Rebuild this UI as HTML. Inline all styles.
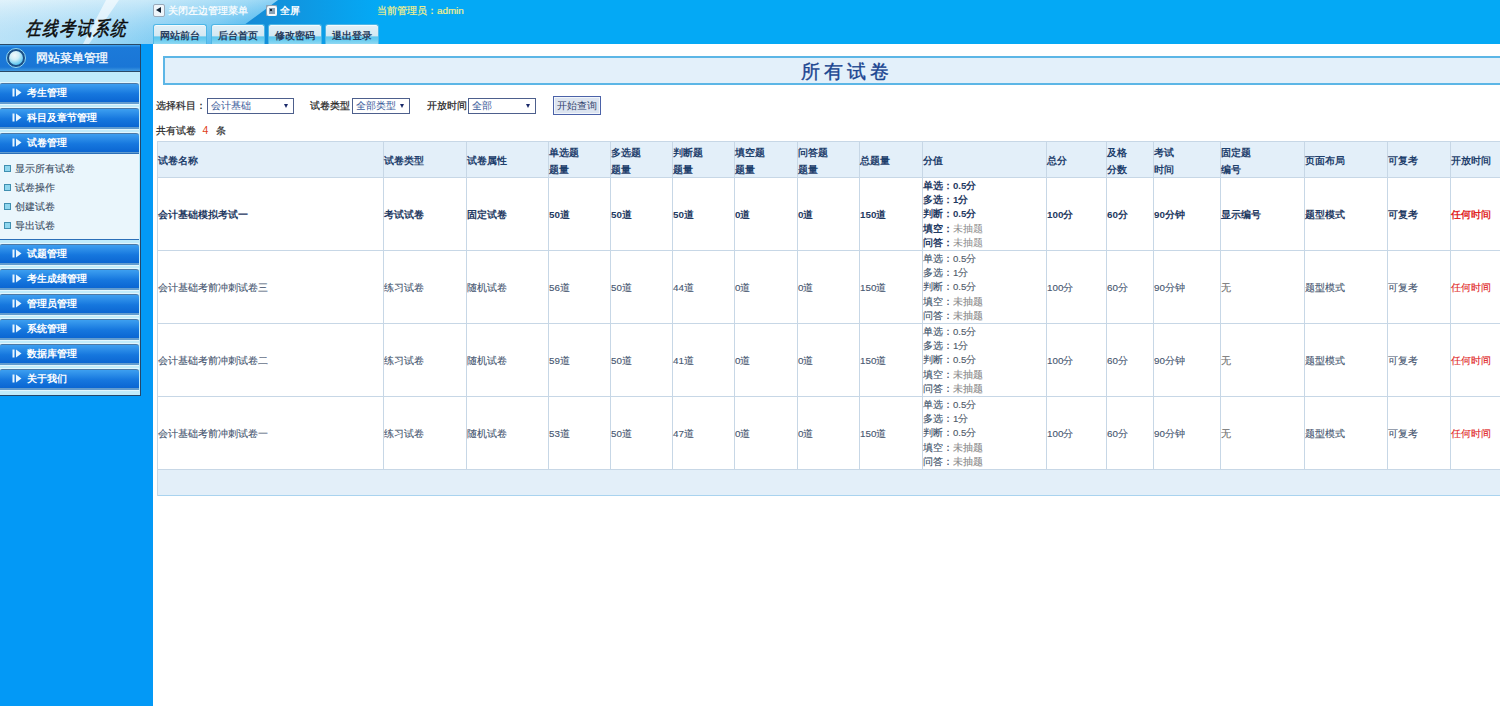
<!DOCTYPE html>
<html><head><meta charset="utf-8"><title>所有试卷</title>
<style>
html,body{margin:0;padding:0;}
body{width:1500px;height:706px;overflow:hidden;position:relative;background:#fff;font-family:"Liberation Sans", sans-serif;}
.abs{position:absolute;}
#hdr{left:0;top:0;width:1500px;height:44px;background:#04a9f5;overflow:hidden;}
#leftbg{left:0;top:44px;width:153px;height:662px;background:#0399f6;}
#side{left:0;top:44px;width:140px;height:351px;background:#c0ebfb;border-right:1px solid #24476a;border-bottom:1px solid #24476a;}
.ttl{left:0;top:0;width:140px;height:27px;}
.mi{position:absolute;left:0;width:139px;height:20px;border-radius:2px 3px 0 0;}
.mi .b{position:absolute;left:0;top:0;width:139px;height:18px;border-top:1px solid #4b79a6;background:linear-gradient(#3d9ff0,#1677de 55%,#0b66d2);border-radius:2px 3px 0 0;}
.mi .s{position:absolute;left:0;top:19px;width:139px;height:2px;background:#629ccf;}
.mi .h1{position:absolute;left:0;top:-1px;width:139px;height:1px;background:#e2f6fd;}
.mi .h2{position:absolute;left:0;top:21px;width:139px;height:1px;background:#e2f6fd;}
.mi .ic{position:absolute;left:12px;top:5px;}
.mi .t{position:absolute;left:27px;top:3px;font-size:9.6px;font-weight:bold;color:#fff;line-height:14px;white-space:nowrap;}
#sub{left:0;top:109px;width:139px;height:85px;background:#eaf6fc;border-top:1px solid #2b6fb8;border-bottom:1px solid #2b6fb8;}
.si{position:absolute;left:4px;font-size:9.7px;color:#3a4c62;line-height:12px;white-space:nowrap;-webkit-text-stroke:0.1px #3a4c62;}
.si i{display:inline-block;width:5px;height:5px;border:1px solid #3f8fb0;background:#8fd6ee;margin-right:4px;vertical-align:0px;}
.tab{top:24px;width:52px;height:19px;border:1px solid #4db6e6;border-bottom:none;border-radius:3px 3px 0 0;box-shadow:inset 0 1px 0 #f4fbfe;background:linear-gradient(#e2f0f7,#d3e8f2 58%,#5cc5ee 62%,#6ccdf0 80%,#8fd8f3);font-size:10px;font-weight:bold;color:#283e5e;text-align:center;line-height:21px;}
.cell{position:absolute;font-size:9.8px;white-space:nowrap;}
.rg{-webkit-text-stroke:0.12px currentColor;}
.vl{position:absolute;width:1px;background:#c7d7e6;}
.hl{position:absolute;height:1px;background:#c7d7e6;}
</style></head><body>

<div id="hdr" class="abs">
<svg width="1500" height="44" style="position:absolute;left:0;top:0"><defs><linearGradient id="bl" x1="0" y1="0" x2="1" y2="0"><stop offset="0" stop-color="#1785d2"/><stop offset="0.35" stop-color="#1292dc"/><stop offset="1" stop-color="#04a9f5"/></linearGradient><linearGradient id="lg" x1="0" y1="0" x2="1" y2="0.25"><stop offset="0" stop-color="#d4edf9"/><stop offset="0.5" stop-color="#b2e0f7"/><stop offset="0.85" stop-color="#7acbf2"/><stop offset="1" stop-color="#4cb8ef"/></linearGradient><linearGradient id="lg2" x1="0" y1="0" x2="0" y2="1"><stop offset="0" stop-color="#ffffff" stop-opacity="0.3"/><stop offset="1" stop-color="#3aa8ec" stop-opacity="0.08"/></linearGradient></defs><rect x="226" y="0" width="150" height="44" fill="url(#bl)"/><polygon points="0,0 278,0 244,25 228,44 0,44" fill="url(#lg)"/><polygon points="0,0 278,0 244,25 228,44 0,44" fill="url(#lg2)"/><polygon points="106,0 119,0 89,44 83,44" fill="#ffffff" opacity="0.6"/></svg>
<div class="abs" style="left:27px;top:16px;font-family:'Liberation Serif',serif;font-size:15.5px;font-weight:normal;font-style:italic;color:#101010;letter-spacing:1px;line-height:20px;white-space:nowrap;transform-origin:0 0;transform:scaleY(1.25) skewX(-6deg);-webkit-text-stroke:0.45px #0a0a0a;">在线考试系统</div>
<div class="abs" style="left:153px;top:4px;width:10px;height:11px;border:1px solid #9ab;border-radius:2px;background:#eef5fa;"><div style="position:absolute;left:2px;top:2px;width:0;height:0;border-top:3.5px solid transparent;border-bottom:3.5px solid transparent;border-right:5px solid #123;"></div></div>
<div class="abs" style="left:168px;top:4px;font-size:9.7px;color:#ffffff;line-height:13px;white-space:nowrap;-webkit-text-stroke:0.2px #fff;">关闭左边管理菜单</div>
<div class="abs" style="left:265.5px;top:4.5px;width:11px;height:11px;background:#8aa2b6;border-radius:1px;"><div style="position:absolute;left:1px;top:1px;width:6px;height:6px;border:2px solid #f6f9fb;border-radius:2px;"></div><div style="position:absolute;left:4.5px;top:4.5px;width:2px;height:2px;background:#1a2a3a;"></div></div>
<div class="abs" style="left:280px;top:4px;font-size:9.8px;color:#fff;font-weight:bold;line-height:13px;white-space:nowrap;">全屏</div>
<div class="abs" style="left:377px;top:4px;font-size:9.8px;color:#f4f08a;line-height:13px;white-space:nowrap;-webkit-text-stroke:0.2px #f4f08a;">当前管理员：admin</div>
<div class="abs tab" style="left:153px;">网站前台</div>
<div class="abs tab" style="left:211px;">后台首页</div>
<div class="abs tab" style="left:268px;">修改密码</div>
<div class="abs tab" style="left:325px;">退出登录</div>
</div>
<div id="leftbg" class="abs"></div>
<div id="side" class="abs">
<div class="abs" style="left:0;top:0;width:140px;height:1px;background:#2a4a66"></div>
<div class="abs" style="left:0;top:1px;width:140px;height:26px;background:linear-gradient(#41a5f2,#1c7ad9 10%,#1a76d6 85%,#3f9ae0);"></div>
<div class="abs" style="left:0;top:27px;width:140px;height:1px;background:#2a4a66"></div>
<div class="abs" style="left:6px;top:4px;width:18px;height:18px;border-radius:50%;border:1px solid #8fd8f5;background:#1c4f86;"></div>
<div class="abs" style="left:9px;top:7px;width:14px;height:14px;border-radius:50%;background:radial-gradient(circle at 40% 30%,#f2f8fb 0,#d0eef8 35%,#4cc0ee 80%,#2aa6e0 100%);"></div>
<div class="abs" style="left:36px;top:7px;font-size:12px;color:#fff;line-height:15px;white-space:nowrap;-webkit-text-stroke:0.3px #fff;">网站菜单管理</div>
<div class="mi" style="top:39px"><div class="h1"></div><div class="b"></div><div class="s"></div><div class="h2"></div><svg class="ic" width="10" height="9" viewBox="0 0 10 9"><rect x="0.5" y="0.5" width="2" height="8" fill="#e8f6ff"/><polygon points="4,0.5 9.5,4.5 4,8.5" fill="#e8f6ff"/></svg><div class="t">考生管理</div></div>
<div class="mi" style="top:64px"><div class="h1"></div><div class="b"></div><div class="s"></div><div class="h2"></div><svg class="ic" width="10" height="9" viewBox="0 0 10 9"><rect x="0.5" y="0.5" width="2" height="8" fill="#e8f6ff"/><polygon points="4,0.5 9.5,4.5 4,8.5" fill="#e8f6ff"/></svg><div class="t">科目及章节管理</div></div>
<div class="mi" style="top:89px"><div class="h1"></div><div class="b"></div><div class="s"></div><div class="h2"></div><svg class="ic" width="10" height="9" viewBox="0 0 10 9"><rect x="0.5" y="0.5" width="2" height="8" fill="#e8f6ff"/><polygon points="4,0.5 9.5,4.5 4,8.5" fill="#e8f6ff"/></svg><div class="t">试卷管理</div></div>
<div id="sub" class="abs">
<div class="si" style="top:9px"><i></i>显示所有试卷</div>
<div class="si" style="top:28px"><i></i>试卷操作</div>
<div class="si" style="top:47px"><i></i>创建试卷</div>
<div class="si" style="top:66px"><i></i>导出试卷</div>
</div>
<div class="mi" style="top:200px"><div class="h1"></div><div class="b"></div><div class="s"></div><div class="h2"></div><svg class="ic" width="10" height="9" viewBox="0 0 10 9"><rect x="0.5" y="0.5" width="2" height="8" fill="#e8f6ff"/><polygon points="4,0.5 9.5,4.5 4,8.5" fill="#e8f6ff"/></svg><div class="t">试题管理</div></div>
<div class="mi" style="top:225px"><div class="h1"></div><div class="b"></div><div class="s"></div><div class="h2"></div><svg class="ic" width="10" height="9" viewBox="0 0 10 9"><rect x="0.5" y="0.5" width="2" height="8" fill="#e8f6ff"/><polygon points="4,0.5 9.5,4.5 4,8.5" fill="#e8f6ff"/></svg><div class="t">考生成绩管理</div></div>
<div class="mi" style="top:250px"><div class="h1"></div><div class="b"></div><div class="s"></div><div class="h2"></div><svg class="ic" width="10" height="9" viewBox="0 0 10 9"><rect x="0.5" y="0.5" width="2" height="8" fill="#e8f6ff"/><polygon points="4,0.5 9.5,4.5 4,8.5" fill="#e8f6ff"/></svg><div class="t">管理员管理</div></div>
<div class="mi" style="top:275px"><div class="h1"></div><div class="b"></div><div class="s"></div><div class="h2"></div><svg class="ic" width="10" height="9" viewBox="0 0 10 9"><rect x="0.5" y="0.5" width="2" height="8" fill="#e8f6ff"/><polygon points="4,0.5 9.5,4.5 4,8.5" fill="#e8f6ff"/></svg><div class="t">系统管理</div></div>
<div class="mi" style="top:300px"><div class="h1"></div><div class="b"></div><div class="s"></div><div class="h2"></div><svg class="ic" width="10" height="9" viewBox="0 0 10 9"><rect x="0.5" y="0.5" width="2" height="8" fill="#e8f6ff"/><polygon points="4,0.5 9.5,4.5 4,8.5" fill="#e8f6ff"/></svg><div class="t">数据库管理</div></div>
<div class="mi" style="top:325px"><div class="h1"></div><div class="b"></div><div class="s"></div><div class="h2"></div><svg class="ic" width="10" height="9" viewBox="0 0 10 9"><rect x="0.5" y="0.5" width="2" height="8" fill="#e8f6ff"/><polygon points="4,0.5 9.5,4.5 4,8.5" fill="#e8f6ff"/></svg><div class="t">关于我们</div></div>
</div>
<div class="abs" style="left:163px;top:56px;width:1400px;height:25px;background:#e3f0fa;border:2px solid #5cb6e6;border-right:none;"></div>
<div class="abs" style="left:801px;top:59.5px;font-size:18.8px;color:#1a4590;letter-spacing:3.9px;line-height:24px;-webkit-text-stroke:0.35px #1a4590;white-space:nowrap;">所有试卷</div>
<div class="abs" style="left:156px;top:99px;font-size:9.8px;color:#222;line-height:13px;white-space:nowrap;-webkit-text-stroke:0.2px #222;">选择科目：</div>
<div class="abs" style="left:207px;top:98px;width:85px;height:14px;border:1px solid #4d5f8c;background:#fff;"><div style="position:absolute;left:3px;top:0px;font-size:9.8px;color:#3a5a9a;line-height:14px;white-space:nowrap;">会计基础</div><div style="position:absolute;right:5px;top:5px;width:0;height:0;border-left:2.5px solid transparent;border-right:2.5px solid transparent;border-top:4px solid #1a2a6a;"></div></div>
<div class="abs" style="left:310px;top:99px;font-size:9.8px;color:#222;line-height:13px;white-space:nowrap;-webkit-text-stroke:0.2px #222;">试卷类型</div>
<div class="abs" style="left:352px;top:98px;width:56px;height:14px;border:1px solid #4d5f8c;background:#fff;"><div style="position:absolute;left:3px;top:0px;font-size:9.8px;color:#3a5a9a;line-height:14px;white-space:nowrap;">全部类型</div><div style="position:absolute;right:5px;top:5px;width:0;height:0;border-left:2.5px solid transparent;border-right:2.5px solid transparent;border-top:4px solid #1a2a6a;"></div></div>
<div class="abs" style="left:427px;top:99px;font-size:9.8px;color:#222;line-height:13px;white-space:nowrap;-webkit-text-stroke:0.2px #222;">开放时间</div>
<div class="abs" style="left:468px;top:98px;width:66px;height:14px;border:1px solid #4d5f8c;background:#fff;"><div style="position:absolute;left:3px;top:0px;font-size:9.8px;color:#3a5a9a;line-height:14px;white-space:nowrap;">全部</div><div style="position:absolute;right:5px;top:5px;width:0;height:0;border-left:2.5px solid transparent;border-right:2.5px solid transparent;border-top:4px solid #1a2a6a;"></div></div>
<div class="abs" style="left:553px;top:96px;width:46px;height:17px;border:1px solid #4b62a8;box-shadow:inset 0 0 0 1px #f2f6fb;background:#dce4f0;font-size:9.8px;color:#34446e;line-height:18px;text-align:center;white-space:nowrap;">开始查询</div>
<div class="abs" style="left:156px;top:124px;font-size:9.8px;color:#2a2a2a;line-height:13px;white-space:nowrap;-webkit-text-stroke:0.2px #2a2a2a;">共有试卷</div>
<div class="abs" style="left:202.5px;top:123px;font-size:10.5px;color:#e0401a;line-height:14px;white-space:nowrap;">4</div>
<div class="abs" style="left:216px;top:124px;font-size:9.8px;color:#2a2a2a;line-height:13px;white-space:nowrap;-webkit-text-stroke:0.2px #2a2a2a;">条</div>
<div class="abs" style="left:157px;top:141px;width:1400px;height:36px;background:#e3eff9"></div>
<div class="abs" style="left:157px;top:469px;width:1400px;height:27px;background:#e3eff9"></div>
<div class="hl" style="left:157px;top:141px;width:1400px"></div>
<div class="hl" style="left:157px;top:177px;width:1400px"></div>
<div class="hl" style="left:157px;top:250px;width:1400px"></div>
<div class="hl" style="left:157px;top:323px;width:1400px"></div>
<div class="hl" style="left:157px;top:396px;width:1400px"></div>
<div class="hl" style="left:157px;top:469px;width:1400px"></div>
<div class="hl" style="left:157px;top:495px;width:1400px;background:#a9d3ef"></div>
<div class="vl" style="left:157px;top:141px;height:355px"></div>
<div class="vl" style="left:383px;top:141px;height:328px"></div>
<div class="vl" style="left:466px;top:141px;height:328px"></div>
<div class="vl" style="left:548px;top:141px;height:328px"></div>
<div class="vl" style="left:610px;top:141px;height:328px"></div>
<div class="vl" style="left:672px;top:141px;height:328px"></div>
<div class="vl" style="left:734px;top:141px;height:328px"></div>
<div class="vl" style="left:797px;top:141px;height:328px"></div>
<div class="vl" style="left:859px;top:141px;height:328px"></div>
<div class="vl" style="left:922px;top:141px;height:328px"></div>
<div class="vl" style="left:1046px;top:141px;height:328px"></div>
<div class="vl" style="left:1106px;top:141px;height:328px"></div>
<div class="vl" style="left:1153px;top:141px;height:328px"></div>
<div class="vl" style="left:1220px;top:141px;height:328px"></div>
<div class="vl" style="left:1304px;top:141px;height:328px"></div>
<div class="vl" style="left:1387px;top:141px;height:328px"></div>
<div class="vl" style="left:1450px;top:141px;height:328px"></div>
<div class="vl" style="left:1530px;top:141px;height:328px"></div>
<div class="cell" style="left:158px;top:153.5px;line-height:14px;font-weight:bold;color:#1e406c">试卷名称</div>
<div class="cell" style="left:384px;top:153.5px;line-height:14px;font-weight:bold;color:#1e406c">试卷类型</div>
<div class="cell" style="left:467px;top:153.5px;line-height:14px;font-weight:bold;color:#1e406c">试卷属性</div>
<div class="cell" style="left:549px;top:143.8px;line-height:17.3px;font-weight:bold;color:#1e406c">单选题<br>题量</div>
<div class="cell" style="left:611px;top:143.8px;line-height:17.3px;font-weight:bold;color:#1e406c">多选题<br>题量</div>
<div class="cell" style="left:673px;top:143.8px;line-height:17.3px;font-weight:bold;color:#1e406c">判断题<br>题量</div>
<div class="cell" style="left:735px;top:143.8px;line-height:17.3px;font-weight:bold;color:#1e406c">填空题<br>题量</div>
<div class="cell" style="left:798px;top:143.8px;line-height:17.3px;font-weight:bold;color:#1e406c">问答题<br>题量</div>
<div class="cell" style="left:860px;top:153.5px;line-height:14px;font-weight:bold;color:#1e406c">总题量</div>
<div class="cell" style="left:923px;top:153.5px;line-height:14px;font-weight:bold;color:#1e406c">分值</div>
<div class="cell" style="left:1047px;top:153.5px;line-height:14px;font-weight:bold;color:#1e406c">总分</div>
<div class="cell" style="left:1107px;top:143.8px;line-height:17.3px;font-weight:bold;color:#1e406c">及格<br>分数</div>
<div class="cell" style="left:1154px;top:143.8px;line-height:17.3px;font-weight:bold;color:#1e406c">考试<br>时间</div>
<div class="cell" style="left:1221px;top:143.8px;line-height:17.3px;font-weight:bold;color:#1e406c">固定题<br>编号</div>
<div class="cell" style="left:1305px;top:153.5px;line-height:14px;font-weight:bold;color:#1e406c">页面布局</div>
<div class="cell" style="left:1388px;top:153.5px;line-height:14px;font-weight:bold;color:#1e406c">可复考</div>
<div class="cell" style="left:1451px;top:153.5px;line-height:14px;font-weight:bold;color:#1e406c">开放时间</div>
<div class="cell" style="left:158px;top:208px;line-height:14px;font-weight:bold;color:#1f3a62">会计基础模拟考试一</div>
<div class="cell" style="left:384px;top:208px;line-height:14px;font-weight:bold;color:#1f3a62">考试试卷</div>
<div class="cell" style="left:467px;top:208px;line-height:14px;font-weight:bold;color:#1f3a62">固定试卷</div>
<div class="cell" style="left:549px;top:208px;line-height:14px;font-weight:bold;color:#1f3a62">50道</div>
<div class="cell" style="left:611px;top:208px;line-height:14px;font-weight:bold;color:#1f3a62">50道</div>
<div class="cell" style="left:673px;top:208px;line-height:14px;font-weight:bold;color:#1f3a62">50道</div>
<div class="cell" style="left:735px;top:208px;line-height:14px;font-weight:bold;color:#1f3a62">0道</div>
<div class="cell" style="left:798px;top:208px;line-height:14px;font-weight:bold;color:#1f3a62">0道</div>
<div class="cell" style="left:860px;top:208px;line-height:14px;font-weight:bold;color:#1f3a62">150道</div>
<div class="cell" style="left:923px;top:178.8px;line-height:14.35px;font-size:9.6px"><span style="color:#1f3a62;font-weight:bold">单选：</span><span style="color:#1f3a62;font-weight:bold">0.5分</span><br><span style="color:#1f3a62;font-weight:bold">多选：</span><span style="color:#1f3a62;font-weight:bold">1分</span><br><span style="color:#1f3a62;font-weight:bold">判断：</span><span style="color:#1f3a62;font-weight:bold">0.5分</span><br><span style="color:#1f3a62;font-weight:bold">填空：</span><span style="color:#8a8a8a;font-weight:500">未抽题</span><br><span style="color:#1f3a62;font-weight:bold">问答：</span><span style="color:#8a8a8a;font-weight:500">未抽题</span></div>
<div class="cell" style="left:1047px;top:208px;line-height:14px;font-weight:bold;color:#1f3a62">100分</div>
<div class="cell" style="left:1107px;top:208px;line-height:14px;font-weight:bold;color:#1f3a62">60分</div>
<div class="cell" style="left:1154px;top:208px;line-height:14px;font-weight:bold;color:#1f3a62">90分钟</div>
<div class="cell" style="left:1221px;top:208px;line-height:14px;font-weight:bold;color:#1f3a62">显示编号</div>
<div class="cell" style="left:1305px;top:208px;line-height:14px;font-weight:bold;color:#1f3a62">题型模式</div>
<div class="cell" style="left:1388px;top:208px;line-height:14px;font-weight:bold;color:#1f3a62">可复考</div>
<div class="cell" style="left:1451px;top:208px;line-height:14px;font-weight:bold;color:#e02424">任何时间</div>
<div class="cell rg" style="left:158px;top:281px;line-height:14px;font-weight:500;color:#465670">会计基础考前冲刺试卷三</div>
<div class="cell rg" style="left:384px;top:281px;line-height:14px;font-weight:500;color:#465670">练习试卷</div>
<div class="cell rg" style="left:467px;top:281px;line-height:14px;font-weight:500;color:#465670">随机试卷</div>
<div class="cell rg" style="left:549px;top:281px;line-height:14px;font-weight:500;color:#465670">56道</div>
<div class="cell rg" style="left:611px;top:281px;line-height:14px;font-weight:500;color:#465670">50道</div>
<div class="cell rg" style="left:673px;top:281px;line-height:14px;font-weight:500;color:#465670">44道</div>
<div class="cell rg" style="left:735px;top:281px;line-height:14px;font-weight:500;color:#465670">0道</div>
<div class="cell rg" style="left:798px;top:281px;line-height:14px;font-weight:500;color:#465670">0道</div>
<div class="cell rg" style="left:860px;top:281px;line-height:14px;font-weight:500;color:#465670">150道</div>
<div class="cell rg" style="left:923px;top:251.8px;line-height:14.35px;font-size:9.6px"><span style="color:#3c5068;font-weight:500">单选：</span><span style="color:#505b69;font-weight:500">0.5分</span><br><span style="color:#3c5068;font-weight:500">多选：</span><span style="color:#505b69;font-weight:500">1分</span><br><span style="color:#3c5068;font-weight:500">判断：</span><span style="color:#505b69;font-weight:500">0.5分</span><br><span style="color:#3c5068;font-weight:500">填空：</span><span style="color:#8a8a8a;font-weight:500">未抽题</span><br><span style="color:#3c5068;font-weight:500">问答：</span><span style="color:#8a8a8a;font-weight:500">未抽题</span></div>
<div class="cell rg" style="left:1047px;top:281px;line-height:14px;font-weight:500;color:#465670">100分</div>
<div class="cell rg" style="left:1107px;top:281px;line-height:14px;font-weight:500;color:#465670">60分</div>
<div class="cell rg" style="left:1154px;top:281px;line-height:14px;font-weight:500;color:#465670">90分钟</div>
<div class="cell rg" style="left:1221px;top:281px;line-height:14px;font-weight:500;color:#707070">无</div>
<div class="cell rg" style="left:1305px;top:281px;line-height:14px;font-weight:500;color:#465670">题型模式</div>
<div class="cell rg" style="left:1388px;top:281px;line-height:14px;font-weight:500;color:#465670">可复考</div>
<div class="cell rg" style="left:1451px;top:281px;line-height:14px;font-weight:500;color:#e02424">任何时间</div>
<div class="cell rg" style="left:158px;top:354px;line-height:14px;font-weight:500;color:#465670">会计基础考前冲刺试卷二</div>
<div class="cell rg" style="left:384px;top:354px;line-height:14px;font-weight:500;color:#465670">练习试卷</div>
<div class="cell rg" style="left:467px;top:354px;line-height:14px;font-weight:500;color:#465670">随机试卷</div>
<div class="cell rg" style="left:549px;top:354px;line-height:14px;font-weight:500;color:#465670">59道</div>
<div class="cell rg" style="left:611px;top:354px;line-height:14px;font-weight:500;color:#465670">50道</div>
<div class="cell rg" style="left:673px;top:354px;line-height:14px;font-weight:500;color:#465670">41道</div>
<div class="cell rg" style="left:735px;top:354px;line-height:14px;font-weight:500;color:#465670">0道</div>
<div class="cell rg" style="left:798px;top:354px;line-height:14px;font-weight:500;color:#465670">0道</div>
<div class="cell rg" style="left:860px;top:354px;line-height:14px;font-weight:500;color:#465670">150道</div>
<div class="cell rg" style="left:923px;top:324.8px;line-height:14.35px;font-size:9.6px"><span style="color:#3c5068;font-weight:500">单选：</span><span style="color:#505b69;font-weight:500">0.5分</span><br><span style="color:#3c5068;font-weight:500">多选：</span><span style="color:#505b69;font-weight:500">1分</span><br><span style="color:#3c5068;font-weight:500">判断：</span><span style="color:#505b69;font-weight:500">0.5分</span><br><span style="color:#3c5068;font-weight:500">填空：</span><span style="color:#8a8a8a;font-weight:500">未抽题</span><br><span style="color:#3c5068;font-weight:500">问答：</span><span style="color:#8a8a8a;font-weight:500">未抽题</span></div>
<div class="cell rg" style="left:1047px;top:354px;line-height:14px;font-weight:500;color:#465670">100分</div>
<div class="cell rg" style="left:1107px;top:354px;line-height:14px;font-weight:500;color:#465670">60分</div>
<div class="cell rg" style="left:1154px;top:354px;line-height:14px;font-weight:500;color:#465670">90分钟</div>
<div class="cell rg" style="left:1221px;top:354px;line-height:14px;font-weight:500;color:#707070">无</div>
<div class="cell rg" style="left:1305px;top:354px;line-height:14px;font-weight:500;color:#465670">题型模式</div>
<div class="cell rg" style="left:1388px;top:354px;line-height:14px;font-weight:500;color:#465670">可复考</div>
<div class="cell rg" style="left:1451px;top:354px;line-height:14px;font-weight:500;color:#e02424">任何时间</div>
<div class="cell rg" style="left:158px;top:427px;line-height:14px;font-weight:500;color:#465670">会计基础考前冲刺试卷一</div>
<div class="cell rg" style="left:384px;top:427px;line-height:14px;font-weight:500;color:#465670">练习试卷</div>
<div class="cell rg" style="left:467px;top:427px;line-height:14px;font-weight:500;color:#465670">随机试卷</div>
<div class="cell rg" style="left:549px;top:427px;line-height:14px;font-weight:500;color:#465670">53道</div>
<div class="cell rg" style="left:611px;top:427px;line-height:14px;font-weight:500;color:#465670">50道</div>
<div class="cell rg" style="left:673px;top:427px;line-height:14px;font-weight:500;color:#465670">47道</div>
<div class="cell rg" style="left:735px;top:427px;line-height:14px;font-weight:500;color:#465670">0道</div>
<div class="cell rg" style="left:798px;top:427px;line-height:14px;font-weight:500;color:#465670">0道</div>
<div class="cell rg" style="left:860px;top:427px;line-height:14px;font-weight:500;color:#465670">150道</div>
<div class="cell rg" style="left:923px;top:397.8px;line-height:14.35px;font-size:9.6px"><span style="color:#3c5068;font-weight:500">单选：</span><span style="color:#505b69;font-weight:500">0.5分</span><br><span style="color:#3c5068;font-weight:500">多选：</span><span style="color:#505b69;font-weight:500">1分</span><br><span style="color:#3c5068;font-weight:500">判断：</span><span style="color:#505b69;font-weight:500">0.5分</span><br><span style="color:#3c5068;font-weight:500">填空：</span><span style="color:#8a8a8a;font-weight:500">未抽题</span><br><span style="color:#3c5068;font-weight:500">问答：</span><span style="color:#8a8a8a;font-weight:500">未抽题</span></div>
<div class="cell rg" style="left:1047px;top:427px;line-height:14px;font-weight:500;color:#465670">100分</div>
<div class="cell rg" style="left:1107px;top:427px;line-height:14px;font-weight:500;color:#465670">60分</div>
<div class="cell rg" style="left:1154px;top:427px;line-height:14px;font-weight:500;color:#465670">90分钟</div>
<div class="cell rg" style="left:1221px;top:427px;line-height:14px;font-weight:500;color:#707070">无</div>
<div class="cell rg" style="left:1305px;top:427px;line-height:14px;font-weight:500;color:#465670">题型模式</div>
<div class="cell rg" style="left:1388px;top:427px;line-height:14px;font-weight:500;color:#465670">可复考</div>
<div class="cell rg" style="left:1451px;top:427px;line-height:14px;font-weight:500;color:#e02424">任何时间</div>
</body></html>
